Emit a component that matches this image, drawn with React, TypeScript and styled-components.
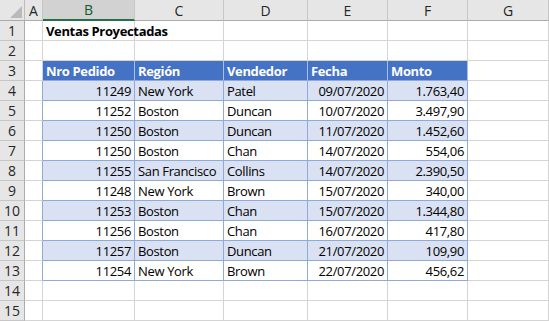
import styled, { createGlobalStyle, css } from "styled-components"

const GlobalStyle = createGlobalStyle`
    html, body {
        margin: 0;
        padding: 0;
        background: #ffffff;
        overflow: hidden;
    }
    body {
        font-family: "Open Sans", "Liberation Sans", sans-serif;
    }
`

const GRID = '#d4d4d4'
const TABLE_LINE = '#8eaadb'
const TABLE_HEAD = '#4472c4'
const BAND = '#d9e1f2'

const COLUMNS = ['A', 'B', 'C', 'D', 'E', 'F', 'G']

type Order = {
    id: number
    region: string
    seller: string
    date: string
    amount: string
}

const ORDERS: Order[] = [
    { id: 11249, region: 'New York', seller: 'Patel', date: '09/07/2020', amount: '1.763,40' },
    { id: 11252, region: 'Boston', seller: 'Duncan', date: '10/07/2020', amount: '3.497,90' },
    { id: 11250, region: 'Boston', seller: 'Duncan', date: '11/07/2020', amount: '1.452,60' },
    { id: 11250, region: 'Boston', seller: 'Chan', date: '14/07/2020', amount: '554,06' },
    { id: 11255, region: 'San Francisco', seller: 'Collins', date: '14/07/2020', amount: '2.390,50' },
    { id: 11248, region: 'New York', seller: 'Brown', date: '15/07/2020', amount: '340,00' },
    { id: 11253, region: 'Boston', seller: 'Chan', date: '15/07/2020', amount: '1.344,80' },
    { id: 11256, region: 'Boston', seller: 'Chan', date: '16/07/2020', amount: '417,80' },
    { id: 11257, region: 'Boston', seller: 'Duncan', date: '21/07/2020', amount: '109,90' },
    { id: 11254, region: 'New York', seller: 'Brown', date: '22/07/2020', amount: '456,62' },
]

const Sheet = styled.div`
    display: grid;
    grid-template-columns: 25px 18px 92px 89px 84px 80px 80px 1fr;
    grid-template-rows: 21px repeat(15, 20px);
    width: 549px;
    height: 321px;
    overflow: hidden;
    font-size: 13px;
    letter-spacing: -0.35px;
    color: #000;
`

const Corner = styled.div`
    position: relative;
    background: #e6e6e6;
    border-right: 1px solid #bdbdbd;
    border-bottom: 1px solid #ababab;
    box-sizing: border-box;
    &::after {
        content: '';
        position: absolute;
        right: 2px;
        bottom: 2px;
        width: 12px;
        height: 12px;
        background: #b9b9b9;
        clip-path: polygon(100% 0, 100% 100%, 0 100%);
    }
`

const ColHead = styled.div<{ $selected?: boolean }>`
    display: flex;
    align-items: center;
    justify-content: center;
    box-sizing: border-box;
    background: #e6e6e6;
    border-right: 1px solid #c6c6c6;
    border-bottom: 1px solid #ababab;
    color: #262626;
    font-size: 14px;
    letter-spacing: 0;
    ${({ $selected }) => $selected && css`
        background: #d2d2d2;
        color: #0f5b2e;
        border-bottom: 2px solid #217346;
    `}
`

const RowHead = styled.div`
    display: flex;
    align-items: center;
    justify-content: center;
    box-sizing: border-box;
    background: #e6e6e6;
    border-right: 1px solid #ababab;
    border-bottom: 1px solid #c6c6c6;
    color: #262626;
    font-size: 14px;
    letter-spacing: 0;
`

type CellKind = 'plain' | 'head' | 'band' | 'row'

const Cell = styled.div<{ $kind?: CellKind; $right?: boolean; $bold?: boolean; $edge?: boolean }>`
    display: flex;
    align-items: center;
    justify-content: ${({ $right }) => ($right ? 'flex-end' : 'flex-start')};
    box-sizing: border-box;
    padding: 1px 3px 0 3px;
    white-space: nowrap;
    overflow: visible;
    border-right: 1px solid ${({ $edge }) => ($edge ? TABLE_LINE : GRID)};
    border-bottom: 1px solid ${GRID};
    font-weight: ${({ $bold }) => ($bold ? 700 : 400)};
    ${({ $kind }) => $kind === 'head' && css`
        background: ${TABLE_HEAD};
        color: #ffffff;
        font-weight: 700;
        border-right-color: #a9bfe6;
        border-bottom-color: ${TABLE_LINE};
    `}
    ${({ $kind }) => ($kind === 'band' || $kind === 'row') && css`
        background: ${$kind === 'band' ? BAND : '#ffffff'};
        border-right-color: ${TABLE_LINE};
        border-bottom-color: ${TABLE_LINE};
    `}
`

const TITLE_ROW = 1
const HEAD_ROW = 3

export default function App() {
    const rows = []
    for (let r = 1; r <= 15; r++) {
        const order = r > HEAD_ROW ? ORDERS[r - HEAD_ROW - 1] : undefined
        const kind: CellKind | undefined = order ? (r % 2 === 0 ? 'band' : 'row') : undefined
        rows.push(<RowHead key={`h${r}`}>{r}</RowHead>)
        rows.push(<Cell key={`a${r}`} $edge={!!order} />)

        if (r === TITLE_ROW) {
            rows.push(<Cell key={`t${r}`} $bold>Ventas Proyectadas</Cell>)
            for (let c = 0; c < 5; c++) rows.push(<Cell key={`e${r}-${c}`} />)
        } else if (r === HEAD_ROW) {
            ;['Nro Pedido', 'Región', 'Vendedor', 'Fecha', 'Monto'].forEach(label =>
                rows.push(<Cell key={`th${label}`} $kind="head">{label}</Cell>)
            )
            rows.push(<Cell key={`g${r}`} />)
        } else if (order) {
            rows.push(<Cell key={`b${r}`} $kind={kind} $right>{order.id}</Cell>)
            rows.push(<Cell key={`c${r}`} $kind={kind}>{order.region}</Cell>)
            rows.push(<Cell key={`d${r}`} $kind={kind}>{order.seller}</Cell>)
            rows.push(<Cell key={`f${r}`} $kind={kind} $right>{order.date}</Cell>)
            rows.push(<Cell key={`m${r}`} $kind={kind} $right>{order.amount}</Cell>)
            rows.push(<Cell key={`g${r}`} />)
        } else {
            for (let c = 0; c < 6; c++) rows.push(<Cell key={`e${r}-${c}`} />)
        }
    }

    return (<>
        <GlobalStyle />
        <Sheet>
            <Corner />
            {COLUMNS.map(col => <ColHead key={col} $selected={col === 'B'}>{col}</ColHead>)}
            {rows}
        </Sheet>
    </>)
}
